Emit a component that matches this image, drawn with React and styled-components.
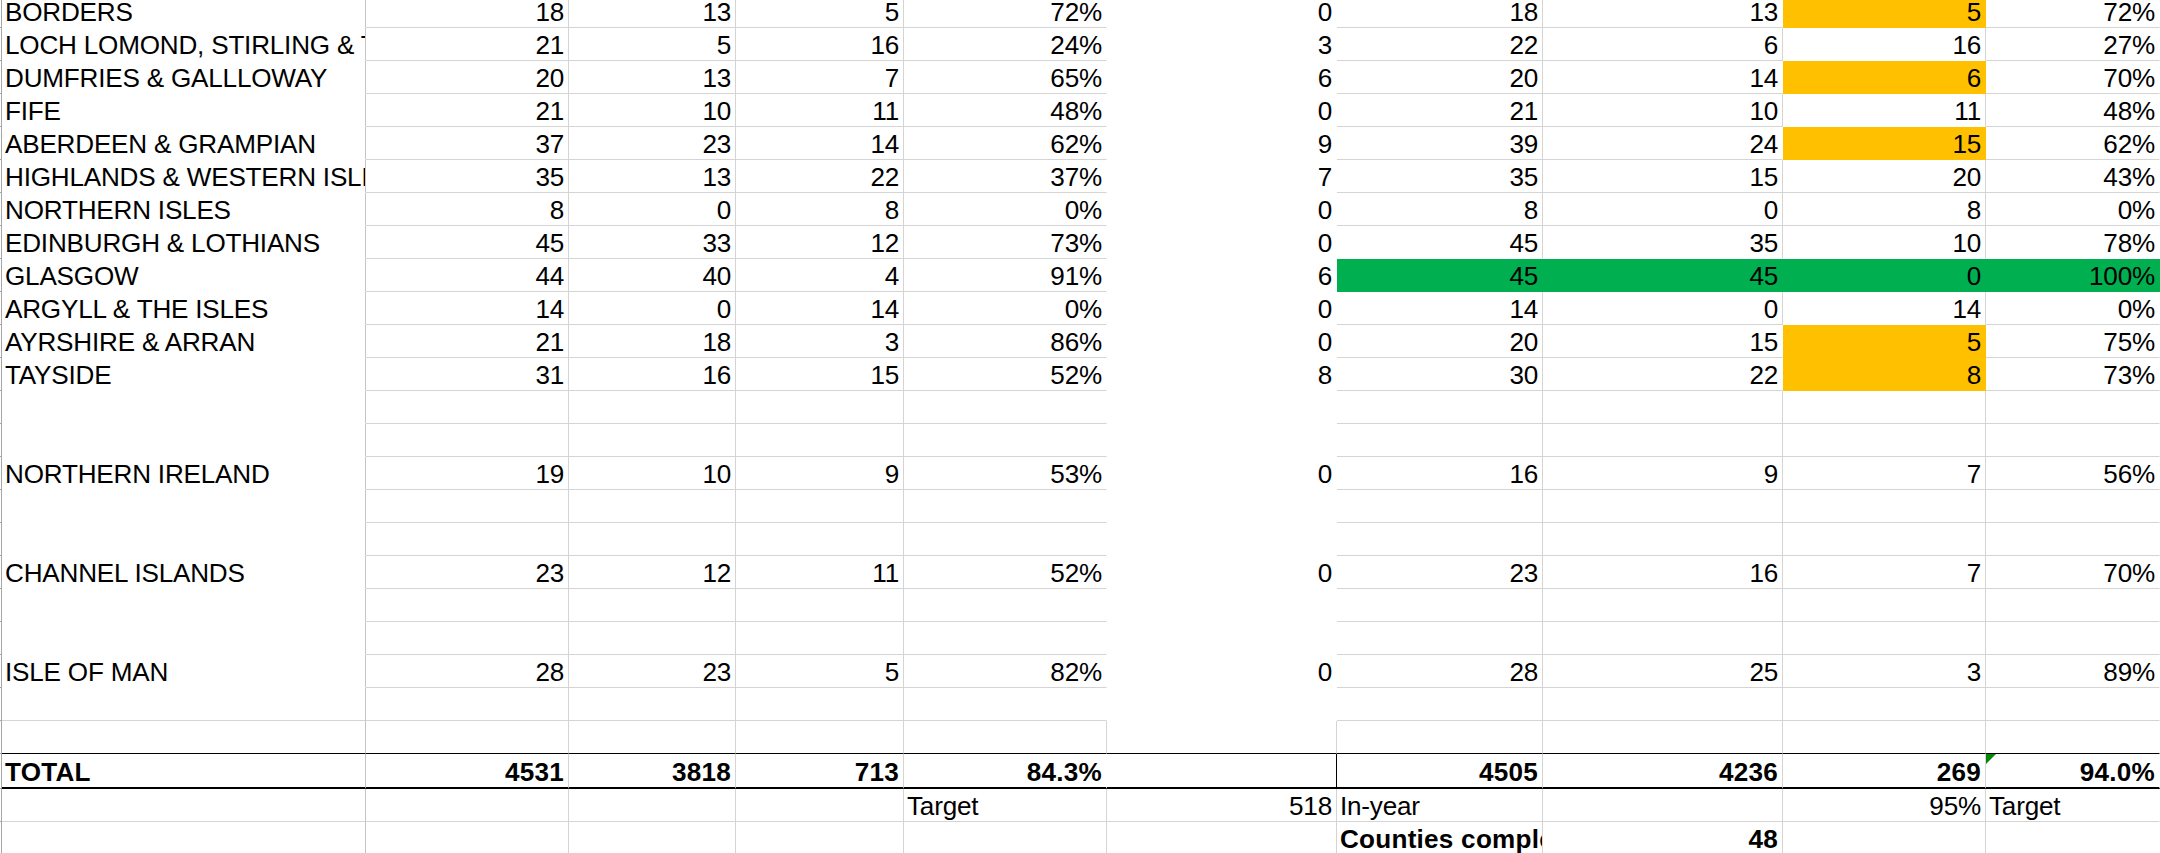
import styled, { createGlobalStyle } from 'styled-components';

const GRID = '#d4d4d4';
const ORANGE = '#ffc000';
const GREEN = '#00b050';
const WHITE = '#ffffff';

const COLS = ['stub', 'A', 'B', 'C', 'D', 'E', 'F', 'G', 'H', 'I', 'J'];

const GlobalStyle = createGlobalStyle`
    html, body {
        margin: 0;
        padding: 0;
        background: #fff;
    }
    body {
        width: 2160px;
        height: 853px;
        overflow: hidden;
        font-family: "Liberation Sans", Arial, sans-serif;
    }
`;

const Sheet = styled.div`
    display: grid;
    grid-template-columns: 2px 364px 203px 167px 168px 203px 230px 206px 240px 203px 1fr;
    grid-template-rows: ${(props) => props.$rows};
    width: 2160px;
    font-family: 'Liberation Sans', Arial, sans-serif;
    font-size: 26.1px;
    color: #000;
`;

const Stub = styled.div`
    box-sizing: border-box;
    border-right: 1px solid #a6a6a6;
    border-bottom: 1px solid #a6a6a6;
`;

const Cell = styled.div`
    position: relative;
    box-sizing: border-box;
    display: flex;
    align-items: flex-end;
    justify-content: ${(props) => (props.$left ? 'flex-start' : 'flex-end')};
    padding: 0 4px 2px 3px;
    overflow: hidden;
    white-space: nowrap;
    line-height: 26px;
    font-weight: ${(props) => (props.$bold ? 700 : 400)};
    letter-spacing: ${(props) => (props.$bold ? '0.25px' : '-0.2px')};
    background: ${(props) => props.$fill || 'transparent'};
    border-right: 1px solid ${(props) => props.$right};
    border-bottom: ${(props) => props.$bw}px solid ${(props) => props.$bottom};
`;

// little green error marker in the corner of a cell
const Flag = styled.span`
    position: absolute;
    top: 0;
    left: 0;
    width: 0;
    height: 0;
    border-top: 10px solid #068706;
    border-right: 10px solid transparent;
`;

const data = (name, nums, fills = {}) => {
    const [B, C, D, E, F, G, H, I, J] = nums;
    return { cells: { A: name, B, C, D, E, F, G, H, I, J }, fills };
};
const blank = () => ({ cells: {}, fills: {} });
const orange = () => ({ I: ORANGE });

const rows = [
    data('BORDERS', [18, 13, 5, '72%', 0, 18, 13, 5, '72%'], orange()),
    data('LOCH LOMOND, STIRLING & TROSSACHS', [21, 5, 16, '24%', 3, 22, 6, 16, '27%']),
    data('DUMFRIES & GALLLOWAY', [20, 13, 7, '65%', 6, 20, 14, 6, '70%'], orange()),
    data('FIFE', [21, 10, 11, '48%', 0, 21, 10, 11, '48%']),
    data('ABERDEEN & GRAMPIAN', [37, 23, 14, '62%', 9, 39, 24, 15, '62%'], orange()),
    data('HIGHLANDS & WESTERN ISLES', [35, 13, 22, '37%', 7, 35, 15, 20, '43%']),
    data('NORTHERN ISLES', [8, 0, 8, '0%', 0, 8, 0, 8, '0%']),
    data('EDINBURGH & LOTHIANS', [45, 33, 12, '73%', 0, 45, 35, 10, '78%']),
    data('GLASGOW', [44, 40, 4, '91%', 6, 45, 45, 0, '100%'], { G: GREEN, H: GREEN, I: GREEN, J: GREEN }),
    data('ARGYLL & THE ISLES', [14, 0, 14, '0%', 0, 14, 0, 14, '0%']),
    data('AYRSHIRE & ARRAN', [21, 18, 3, '86%', 0, 20, 15, 5, '75%'], orange()),
    data('TAYSIDE', [31, 16, 15, '52%', 8, 30, 22, 8, '73%'], orange()),
    blank(),
    blank(),
    data('NORTHERN IRELAND', [19, 10, 9, '53%', 0, 16, 9, 7, '56%']),
    blank(),
    blank(),
    data('CHANNEL ISLANDS', [23, 12, 11, '52%', 0, 23, 16, 7, '70%']),
    blank(),
    blank(),
    data('ISLE OF MAN', [28, 23, 5, '82%', 0, 28, 25, 3, '89%']),
    blank(),
    { ...blank(), edge: { color: '#000', width: 1 } },
    {
        cells: { A: 'TOTAL', B: 4531, C: 3818, D: 713, E: '84.3%', G: 4505, H: 4236, I: 269, J: '94.0%' },
        fills: {},
        bold: true,
        edge: { color: '#000', width: 2 },
        rightEdge: { F: '#000' },
        flag: 'J',
        height: 35,
    },
    { cells: { E: 'Target', F: 518, G: 'In-year', I: '95%', J: 'Target' }, left: ['E', 'G', 'J'], fills: {} },
    { cells: { G: 'Counties complete', H: 48 }, left: ['G'], bold: true, fills: {} },
];

// white-filled cells hide the gridlines around them
rows.forEach((row, r) => {
    if (r <= 20) row.fills.A = WHITE;
    if (r <= 21) row.fills.F = WHITE;
});
rows[23].fills.F = WHITE;

const filled = (r, c) => Boolean(rows[r] && rows[r].fills[c]);

const rightColor = (r, ci) => {
    const c = COLS[ci];
    const row = rows[r];
    if (row.rightEdge && row.rightEdge[c]) return row.rightEdge[c];
    if (c === 'A') return '#c4c4c4';
    if (c === 'J') return 'transparent';
    if (filled(r, c) || filled(r, COLS[ci + 1])) return 'transparent';
    return GRID;
};

const bottomColor = (r, c) => {
    const row = rows[r];
    if (row.edge) return row.edge.color;
    if (filled(r, c) || filled(r + 1, c)) return 'transparent';
    return GRID;
};

function App() {
    const heights = rows.map((row, r) => (r === 0 ? 28 : row.height || 33));

    return (
        <>
            <GlobalStyle />
            <Sheet $rows={heights.map((h) => `${h}px`).join(' ')}>
                {rows.map((row, r) =>
                    COLS.map((c, ci) => {
                        if (c === 'stub') return <Stub key={`${r}-${c}`} />;
                        const value = row.cells[c];
                        const left = c === 'A' || (row.left && row.left.includes(c));
                        return (
                            <Cell
                                key={`${r}-${c}`}
                                $left={left}
                                $bold={row.bold}
                                $fill={row.fills[c]}
                                $right={rightColor(r, ci)}
                                $bottom={bottomColor(r, c)}
                                $bw={row.edge ? row.edge.width : 1}
                            >
                                {row.flag === c && <Flag />}
                                {value !== undefined ? value : ''}
                            </Cell>
                        );
                    }),
                )}
            </Sheet>
        </>
    );
}

export default App;
